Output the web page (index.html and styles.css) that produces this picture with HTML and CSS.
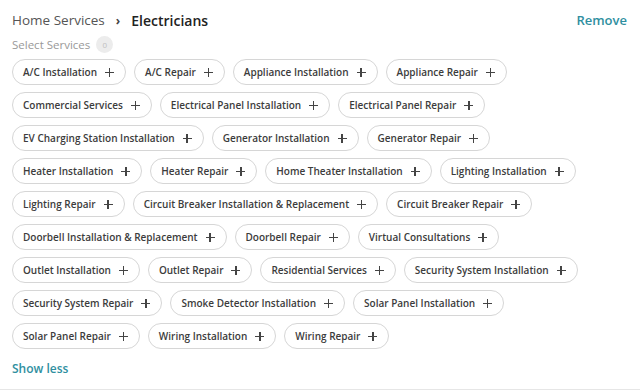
FILE: index.html
```html
<!DOCTYPE html>
<html>
<head>
<meta charset="utf-8">
<link rel="stylesheet" href="styles.css">
</head>
<body>
<div class="panel">
  <div class="header">
    <div class="crumbs"><span class="parent">Home Services</span><span class="sep">›</span><span class="current">Electricians</span></div>
    <a class="remove">Remove</a>
  </div>
  <div class="select-row"><span class="select-label">Select Services</span><span class="badge">0</span></div>
  <div class="chips">
    <span class="chip">A/C Installation<i class="plus"></i></span>
    <span class="chip">A/C Repair<i class="plus"></i></span>
    <span class="chip">Appliance Installation<i class="plus"></i></span>
    <span class="chip">Appliance Repair<i class="plus"></i></span>
    <span class="chip">Commercial Services<i class="plus"></i></span>
    <span class="chip">Electrical Panel Installation<i class="plus"></i></span>
    <span class="chip">Electrical Panel Repair<i class="plus"></i></span>
    <span class="chip">EV Charging Station Installation<i class="plus"></i></span>
    <span class="chip">Generator Installation<i class="plus"></i></span>
    <span class="chip">Generator Repair<i class="plus"></i></span>
    <span class="chip">Heater Installation<i class="plus"></i></span>
    <span class="chip">Heater Repair<i class="plus"></i></span>
    <span class="chip">Home Theater Installation<i class="plus"></i></span>
    <span class="chip">Lighting Installation<i class="plus"></i></span>
    <span class="chip">Lighting Repair<i class="plus"></i></span>
    <span class="chip">Circuit Breaker Installation &amp; Replacement<i class="plus"></i></span>
    <span class="chip">Circuit Breaker Repair<i class="plus"></i></span>
    <span class="chip">Doorbell Installation &amp; Replacement<i class="plus"></i></span>
    <span class="chip">Doorbell Repair<i class="plus"></i></span>
    <span class="chip">Virtual Consultations<i class="plus"></i></span>
    <span class="chip">Outlet Installation<i class="plus"></i></span>
    <span class="chip">Outlet Repair<i class="plus"></i></span>
    <span class="chip">Residential Services<i class="plus"></i></span>
    <span class="chip">Security System Installation<i class="plus"></i></span>
    <span class="chip">Security System Repair<i class="plus"></i></span>
    <span class="chip">Smoke Detector Installation<i class="plus"></i></span>
    <span class="chip">Solar Panel Installation<i class="plus"></i></span>
    <span class="chip">Solar Panel Repair<i class="plus"></i></span>
    <span class="chip">Wiring Installation<i class="plus"></i></span>
    <span class="chip">Wiring Repair<i class="plus"></i></span>
  </div>
  <a class="show-less">Show less</a>
</div>
</body>
</html>
```
FILE: styles.css
```css
* { box-sizing: border-box; }
html, body { margin: 0; padding: 0; background: #fff; }
body { font-family: "Open Sans", "Noto Sans", sans-serif; color: #333; }
.panel {
  width: 640px;
  height: 390px;
  padding: 10px 13px 0 12px;
  border-bottom: 1px solid #e6e6e6;
  display: flex;
  flex-direction: column;
}
.header {
  display: flex;
  justify-content: space-between;
  align-items: center;
  height: 20px;
}
.crumbs { font-size: 13.5px; color: #555; display: flex; align-items: center; }
.sep { font-weight: 700; margin: 0 11px 0 11px; font-size: 12px; color: #444; }
.current { font-weight: 600; color: #222; font-size: 14px; }
.remove { font-size: 13px; font-weight: 600; color: #2f8fa0; }
.select-row { display: flex; align-items: center; margin-top: 5px; height: 18px; }
.select-label { font-size: 11.5px; color: #999; }
.badge {
  margin-left: 6px;
  width: 17px; height: 17px;
  border-radius: 50%;
  background: #ececec;
  color: #c0c0c0;
  font-size: 8px;
  display: flex; align-items: center; justify-content: center;
}
.chips {
  display: flex;
  flex-wrap: wrap;
  gap: 7px 8px;
  margin-top: 6px;
}
.chip {
  height: 26px;
  border: 1px solid #d6d6d6;
  border-radius: 13px;
  padding: 0 11px 0 10px;
  font-size: 10px;
  font-weight: 600;
  color: #3c3c3c;
  display: inline-flex;
  align-items: center;
  white-space: nowrap;
}
.plus {
  position: relative;
  width: 9px; height: 9px;
  margin-left: 8px;
}
.plus::before, .plus::after {
  content: "";
  position: absolute;
  background: #444;
}
.plus::before { left: 0; top: 4px; width: 9px; height: 1.5px; }
.plus::after { left: 3.75px; top: 0; width: 1.5px; height: 9px; }
.show-less {
  margin-top: 11px;
  font-size: 12px;
  font-weight: 600;
  color: #2f8fa0;
}
```
